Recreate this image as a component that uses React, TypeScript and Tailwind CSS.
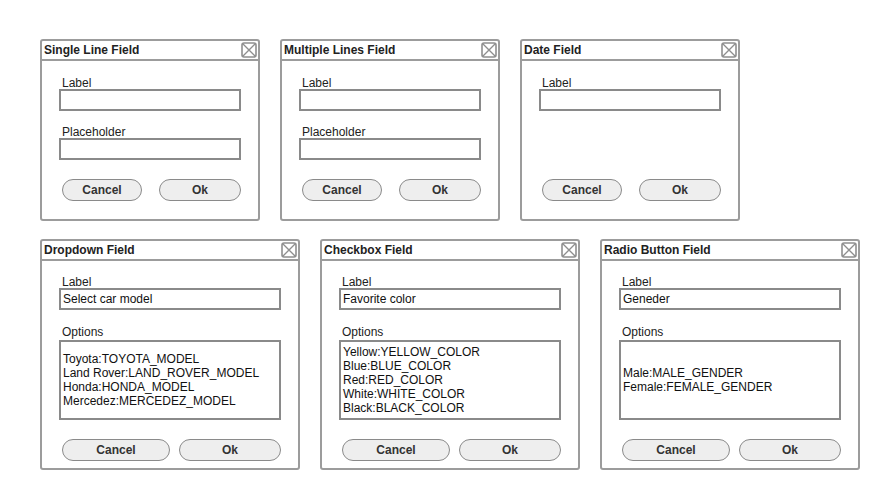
import type { ReactNode } from 'react'

function CloseIcon() {
  return (
    <svg width="16" height="16" viewBox="0 0 16 16" fill="none">
      <rect x="1" y="1" width="14" height="14" rx="2" stroke="#8f8f8f" strokeWidth="1.6" />
      <path d="M1.5 1.5 L14.5 14.5 M14.5 1.5 L1.5 14.5" stroke="#8f8f8f" strokeWidth="1.4" />
    </svg>
  )
}

function Window({
  title,
  className,
  children,
}: {
  title: string
  className: string
  children: ReactNode
}) {
  return (
    <div className={`flex flex-col rounded-[3px] border-2 border-[#9c9c9c] bg-white ${className}`}>
      <div className="flex h-[20px] items-center justify-between border-b-2 border-[#9c9c9c] pl-[2px] pr-[1px]">
        <span className="text-[12px] font-bold leading-[14px] text-[#222]">{title}</span>
        <CloseIcon />
      </div>
      {children}
    </div>
  )
}

function Label({ text, top }: { text: string; top: string }) {
  return <p className={`${top} pl-[3px] text-[12px] leading-[12px] text-[#222]`}>{text}</p>
}

function Input({ value }: { value?: string }) {
  return (
    <div className="flex h-[22px] items-center border-2 border-[#8a8a8a] pl-[2px] text-[12px] text-[#111]">
      {value}
    </div>
  )
}

function Buttons({ wide }: { wide?: boolean }) {
  const btn =
    'flex h-[22px] items-center justify-center rounded-full border-[1.5px] border-[#8a8a8a] bg-[#eeeeee] text-[12px] font-bold text-[#333]'
  return (
    <div className={`mt-auto flex ${wide ? 'gap-[9px] pl-[3px]' : 'gap-[17px] pl-[3px]'}`}>
      <div className={`${btn} ${wide ? 'w-[108px]' : 'w-[80px]'}`}>Cancel</div>
      <div className={`${btn} ${wide ? 'w-[102px]' : 'w-[82px]'}`}>Ok</div>
    </div>
  )
}

function SmallWindow({ title, placeholder }: { title: string; placeholder?: boolean }) {
  return (
    <Window title={title} className="h-[182px] w-[220px]">
      <div className="flex flex-1 flex-col px-[17px] pb-[18px]">
        <Label text="Label" top="mt-[16px]" />
        <Input />
        {placeholder && (
          <>
            <Label text="Placeholder" top="mt-[15px]" />
            <Input />
          </>
        )}
        <Buttons />
      </div>
    </Window>
  )
}

function OptionsWindow({ title, label, options }: { title: string; label: string; options: string[] }) {
  return (
    <Window title={title} className="h-[231px] w-[260px]">
      <div className="flex flex-1 flex-col px-[17px] pb-[7px]">
        <Label text="Label" top="mt-[15px]" />
        <Input value={label} />
        <Label text="Options" top="mt-[16px]" />
        <div className="mt-[2px] flex h-[80px] flex-col justify-center border-2 border-[#8a8a8a] pl-[2px] text-[12px] leading-[14px] text-[#111]">
          {options.map((o) => (
            <span key={o}>{o}</span>
          ))}
        </div>
        <Buttons wide />
      </div>
    </Window>
  )
}

export default function App() {
  return (
    <div className="min-h-[490px] bg-white pl-[40px] pt-[39px] font-['Liberation_Sans',Arial,sans-serif]">
      <div className="flex gap-[20px]">
        <SmallWindow title="Single Line Field" placeholder />
        <SmallWindow title="Multiple Lines Field" placeholder />
        <SmallWindow title="Date Field" />
      </div>
      <div className="mt-[18px] flex gap-[20px]">
        <OptionsWindow
          title="Dropdown Field"
          label="Select car model"
          options={[
            'Toyota:TOYOTA_MODEL',
            'Land Rover:LAND_ROVER_MODEL',
            'Honda:HONDA_MODEL',
            'Mercedez:MERCEDEZ_MODEL',
          ]}
        />
        <OptionsWindow
          title="Checkbox Field"
          label="Favorite color"
          options={[
            'Yellow:YELLOW_COLOR',
            'Blue:BLUE_COLOR',
            'Red:RED_COLOR',
            'White:WHITE_COLOR',
            'Black:BLACK_COLOR',
          ]}
        />
        <OptionsWindow
          title="Radio Button Field"
          label="Geneder"
          options={['Male:MALE_GENDER', 'Female:FEMALE_GENDER']}
        />
      </div>
    </div>
  )
}
